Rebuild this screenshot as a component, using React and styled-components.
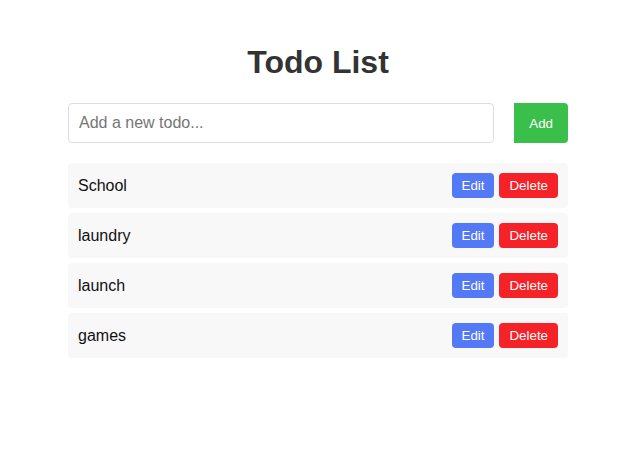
import React, { useState } from "react";
import styled, { createGlobalStyle } from "styled-components";

const GlobalStyle = createGlobalStyle`
  body {
    margin: 0;
    background: #fff;
    font-family: "Liberation Sans", Arial, sans-serif;
  }
`;

const Wrapper = styled.div`
  width: 500px;
  margin-left: calc(50% - 251px);
  padding-top: 44px;
`;

const Title = styled.h1`
  margin: 0 0 22px;
  font-size: 32px;
  line-height: 37px;
  font-weight: 700;
  text-align: center;
  color: #333;
`;

const Form = styled.form`
  display: flex;
  gap: 20px;
  margin-bottom: 20px;
`;

const Input = styled.input`
  flex: 1;
  height: 40px;
  box-sizing: border-box;
  padding: 10px;
  border: 1px solid #ddd;
  border-radius: 4px;
  font-family: inherit;
  font-size: 16px;
  color: #333;
  outline: none;

  &::placeholder {
    color: #757575;
  }
`;

const Button = styled.button`
  border: none;
  border-radius: ${(p) => p.$radius || "4px"};
  color: #fff;
  font-family: inherit;
  font-size: 13.333px;
  line-height: normal;
  cursor: pointer;
  background: ${(p) => p.$bg};
  padding: ${(p) => p.$pad};
`;

const List = styled.ul`
  list-style: none;
  margin: 0;
  padding: 0;
  display: flex;
  flex-direction: column;
  gap: 5px;
`;

const Item = styled.li`
  display: flex;
  align-items: center;
  justify-content: space-between;
  height: 45px;
  box-sizing: border-box;
  padding: 0 10px;
  background: #f8f8f8;
  border-radius: 4px;
  font-size: 16px;
  color: #111;
`;

const Actions = styled.div`
  display: flex;
  gap: 5px;
`;

export default function App() {
  const [todos] = useState(["School", "laundry", "launch", "games"]);

  return (
    <>
      <GlobalStyle />
      <Wrapper>
        <Title>Todo List</Title>
        <Form onSubmit={(e) => e.preventDefault()}>
          <Input placeholder="Add a new todo..." />
          <Button $bg="#3abf4a" $pad="0 15px" $radius="0 4px 4px 0">
            Add
          </Button>
        </Form>
        <List>
          {todos.map((t) => (
            <Item key={t}>
              <span>{t}</span>
              <Actions>
                <Button $bg="#5379f6" $pad="5px 10px">
                  Edit
                </Button>
                <Button $bg="#f52228" $pad="5px 10px">
                  Delete
                </Button>
              </Actions>
            </Item>
          ))}
        </List>
      </Wrapper>
    </>
  );
}
